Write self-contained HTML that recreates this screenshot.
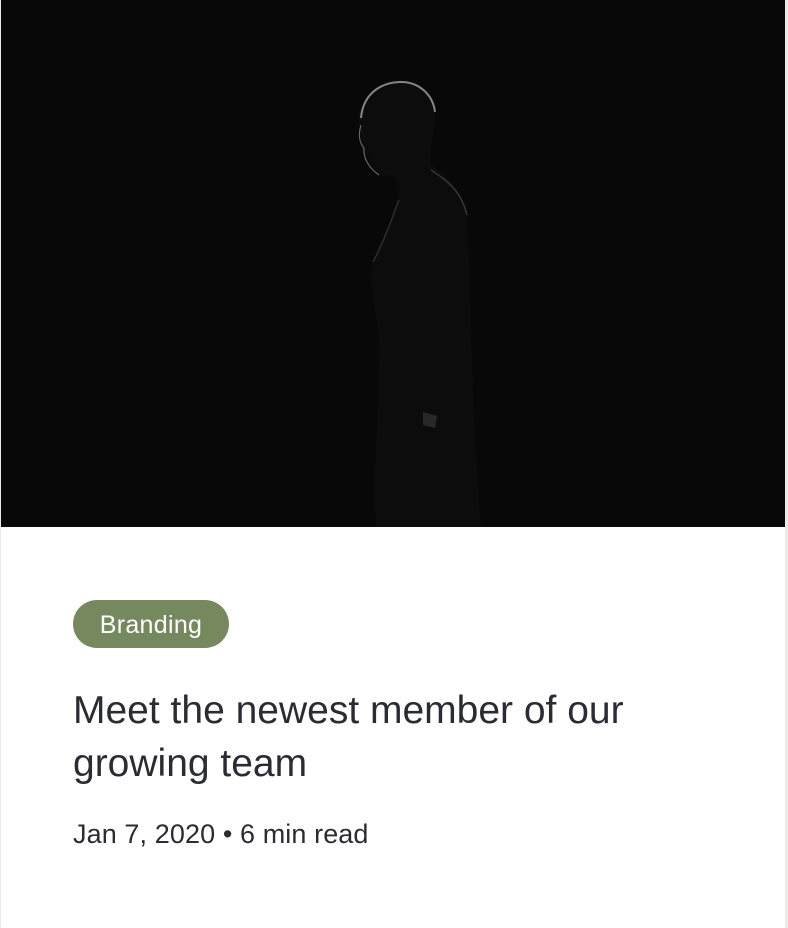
<!DOCTYPE html>
<html><head><meta charset="utf-8"><style>
html,body{margin:0;padding:0;background:#eeeae6;width:788px;height:928px;overflow:hidden}
.card{position:absolute;left:1px;top:0;width:784px;height:928px;background:#fff}
.img{position:absolute;left:0;top:0;width:784px;height:527px;background:#080808}
.badge{position:absolute;left:72px;top:600px;width:156px;height:48px;border-radius:24px;background:#76895e;color:#fff;font:25px/50px "Liberation Sans",sans-serif;text-align:center;letter-spacing:0.3px}
h1{position:absolute;left:72px;top:684px;margin:0;width:660px;font:500 39px/53px "Liberation Sans",sans-serif;color:#2b2b33;letter-spacing:0}
.meta{position:absolute;left:72px;top:816px;font:27px/36px "Liberation Sans",sans-serif;color:#2b2b33;letter-spacing:0.1px}
</style></head><body>
<div class="card">
<div class="img">
<svg width="784" height="527" viewBox="0 0 784 527">
<path d="M395 82 C420 80 436 95 434 122 C432 140 428 150 430 165 C445 175 462 190 466 215 C470 300 470 400 480 527 L375 527 C372 450 380 390 378 330 C372 300 368 280 372 262 C380 240 390 220 398 200 C400 190 398 180 390 175 C378 178 372 170 370 160 L360 150 C362 140 357 130 358 118 C362 95 378 83 395 82 Z" fill="#0c0c0c"/>
<path d="M360 118 C362 95 378 83 398 82 C418 81 432 95 434 112" fill="none" stroke="#bbb" stroke-width="2" opacity="0.7"/>
<path d="M360 125 C357 135 358 142 363 148 C362 158 368 168 378 175" fill="none" stroke="#aaa" stroke-width="1.2" opacity="0.6"/>
<path d="M430 170 C445 180 460 190 466 215" fill="none" stroke="#555" stroke-width="1.5" opacity="0.6"/>
<path d="M398 200 C392 215 386 235 372 262" fill="none" stroke="#444" stroke-width="1.5" opacity="0.6"/>
<path d="M422 412 L436 416 L434 428 L422 425 Z" fill="#444" opacity="0.5"/>
</svg>
</div>
<div class="badge">Branding</div>
<h1>Meet the newest member of our growing team</h1>
<div class="meta">Jan 7, 2020 • 6 min read</div>
</div>
</body></html>
